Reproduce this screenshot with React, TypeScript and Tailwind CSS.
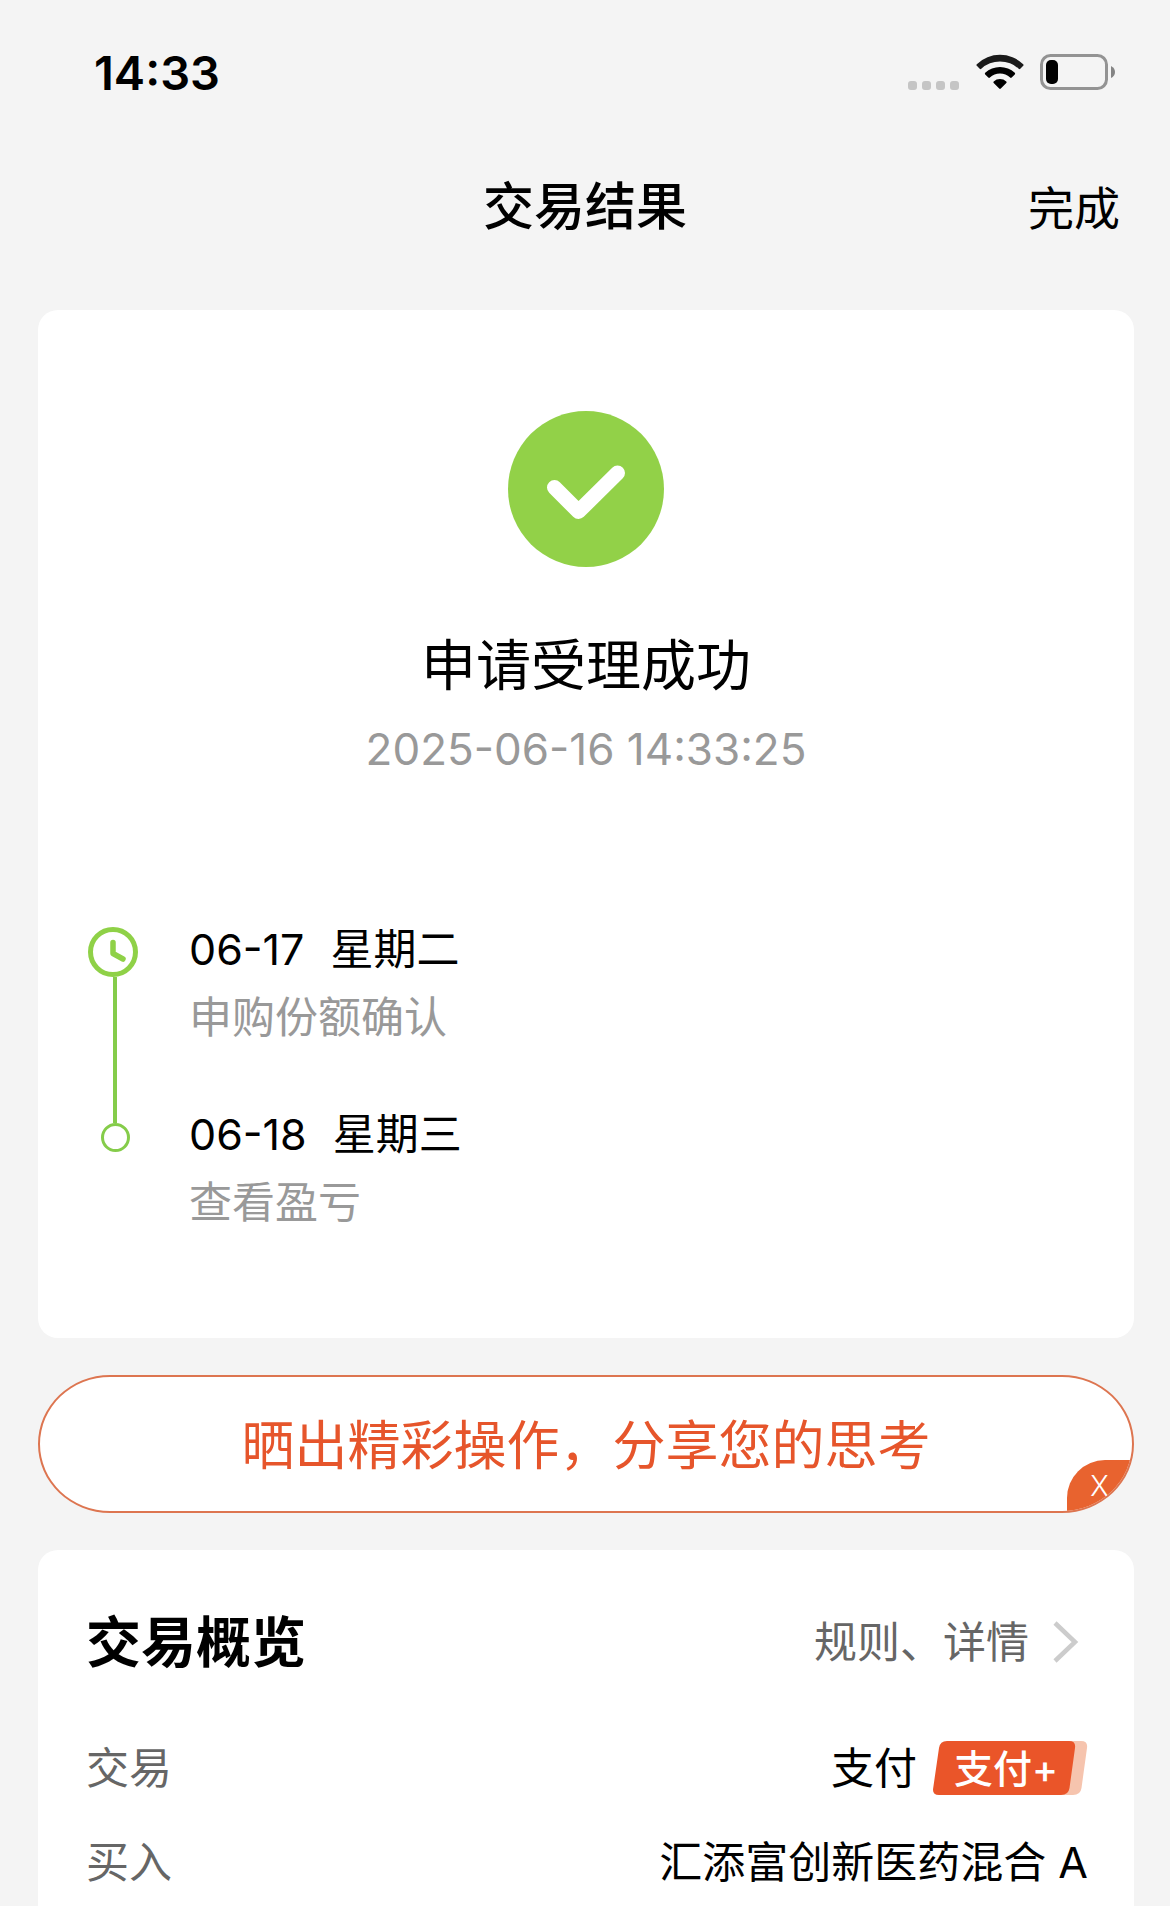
import type { ReactNode } from "react";

const steps = [
  { date: "06-17", day: "星期二", label: "申购份额确认" },
  { date: "06-18", day: "星期三", label: "查看盈亏" },
];

const StatusBar = () => {
  return (
    <div className="flex h-[144px] items-center justify-between pl-[94px] pr-[54px]">
      <span className="text-[47px] font-semibold leading-none">14:33</span>
      <div className="flex items-center">
        <svg width="52" height="36" viewBox="0 0 52 36" fill="#c5c5c5" className="mr-4">
          <rect x="0" y="27" width="9" height="9" rx="3" />
          <rect x="14" y="27" width="9" height="9" rx="3" />
          <rect x="28" y="27" width="9" height="9" rx="3" />
          <rect x="42" y="27" width="9" height="9" rx="3" />
        </svg>
        <svg width="48" height="36" viewBox="0 0 48 36" className="mr-4">
          <path
            d="M0.8 10.2 A33.5 33.5 0 0 1 47.2 10.2 Q48 11 47.2 11.8 L44.3 14.8 Q43.5 15.6 42.7 14.8 A27.5 27.5 0 0 0 5.3 14.8 Q4.5 15.6 3.7 14.8 L0.8 11.8 Q0 11 0.8 10.2 Z"
            fill="#1a1a1a"
          />
          <path d="M9.2 18.8 A21.5 21.5 0 0 1 38.8 18.8 Q39.6 19.6 38.8 20.4 L35.7 23.5 Q34.9 24.3 34.1 23.5 A15 15 0 0 0 13.9 23.5 Q13.1 24.3 12.3 23.5 L9.2 20.4 Q8.4 19.6 9.2 18.8 Z" />
          <path d="M17.7 27.4 A9.6 9.6 0 0 1 30.3 27.4 Q31.1 28.2 30.3 29 L24.8 34.6 Q24 35.4 23.2 34.6 L17.7 29 Q16.9 28.2 17.7 27.4 Z" />
        </svg>
        <svg width="76" height="36" viewBox="0 0 76 36">
          <rect x="1.5" y="1.5" width="65" height="33" rx="9" fill="none" stroke="#939393" strokeWidth="3" />
          <rect x="6" y="6" width="12" height="24" rx="5" />
          <path d="M71 12 Q75 14 75 18 Q75 22 71 24 Z" fill="#848484" />
        </svg>
      </div>
    </div>
  );
};

const ClockIcon = () => {
  return (
    <svg width="54" height="50" viewBox="0 0 54 50" fill="none" stroke="#8fd147">
      <circle cx="25" cy="25" r="22.5" strokeWidth="5" />
      <path d="M25 15.5 V26.5 L35 32" strokeWidth="5.5" strokeLinecap="round" strokeLinejoin="round" />
    </svg>
  );
};

const PayPlusBadge = () => {
  return (
    <span className="relative flex h-[54px] w-[155px] items-center pl-[21px] text-[39px] font-medium leading-none text-white">
      <svg width="155" height="54" viewBox="0 0 155 54" className="absolute left-0 top-0">
        <path
          d="M130 0 H148 Q155 0 154 7 L148.5 47 Q147.5 54 140 54 H125 Z"
          fill="#f6c4ae"
        />
        <path
          d="M14 0 H136 Q143 0 142 7 L136.5 47 Q135.5 54 128 54 H6 Q-1 54 0.2 47 L6 7 Q7 0 14 0 Z"
          fill="#ea5529"
        />
      </svg>
      <span className="relative">支付+</span>
    </span>
  );
};

const Row = ({ label, children }: { label: string; children: ReactNode }) => {
  return (
    <div className="flex h-[94px] items-center justify-between text-[43px]">
      <dt className="text-[#666666]">{label}</dt>
      <dd className="flex items-center gap-4">{children}</dd>
    </div>
  );
};

const App = () => {
  return (
    <div className="flex min-h-screen flex-col bg-[#f4f4f4] font-['Inter','Noto_Sans_CJK_SC',sans-serif] text-black">
      <StatusBar />

      <header className="grid h-[120px] grid-cols-3 items-center px-[50px] pt-1">
        <h1 className="col-start-2 text-center text-[51px] font-medium leading-none">交易结果</h1>
        <button type="button" className="justify-self-end pt-1 text-[46px] leading-none">
          完成
        </button>
      </header>

      <main className="flex flex-1 flex-col pl-[38px] pr-9 pt-[46px]">
        <section className="rounded-[20px] bg-white px-[50px] pb-[102px] pt-[101px]">
          <div className="flex flex-col items-center">
            <svg width="156" height="156" viewBox="0 0 156 156">
              <circle cx="78" cy="78" r="78" fill="#92d148" />
              <path
                d="M46.5 76.5 L70.5 100.5 L109.5 62"
                fill="none"
                stroke="white"
                strokeWidth="15"
                strokeLinecap="round"
                strokeLinejoin="round"
              />
            </svg>
            <h2 className="mt-14 text-[55px] leading-[84px]">申请受理成功</h2>
            <p className="text-[44px] leading-[84px] text-[#999999]">2025-06-16 14:33:25</p>
          </div>

          <ol className="mt-[124px]">
            {steps.map((step, i) => (
              <li key={step.date} className="flex gap-[47px]">
                <div className="flex w-[54px] flex-col items-center">
                  {i === 0 ? (
                    <>
                      <div className="pt-3">
                        <ClockIcon />
                      </div>
                      <div className="w-1 flex-1 bg-[#85cc4a]" />
                    </>
                  ) : (
                    <>
                      <div className="h-[23px] w-1 bg-[#85cc4a]" />
                      <div className="size-[29px] rounded-full border-3 border-[#85cc4a]" />
                    </>
                  )}
                </div>
                <div className={i === 0 ? "pb-[49px]" : ""}>
                  <p className="flex gap-[26px] text-[43px] leading-[68px]">
                    <span>{step.date}</span>
                    <span>{step.day}</span>
                  </p>
                  <p className="text-[43px] leading-[68px] text-[#999999]">{step.label}</p>
                </div>
              </li>
            ))}
          </ol>
        </section>

        <div className="relative mt-[37px] flex h-[138px] items-center justify-center overflow-hidden rounded-[72px_/_69px] border-2 border-[#dd7550] bg-white">
          <a href="#share" className="pt-1 text-[53px] leading-none text-[#e6552b]">
            晒出精彩操作，分享您的思考
          </a>
          <button
            type="button"
            aria-label="X"
            className="absolute bottom-0 right-0 h-[51px] w-[65px] rounded-tl-[38px] bg-[#e8632f] text-[28px] font-light leading-none text-white"
          >
            X
          </button>
        </div>

        <section className="mt-[37px] flex-1 rounded-t-[20px] bg-white pl-12 pr-[46px] pt-12">
          <div className="flex h-[88px] items-center justify-between">
            <h2 className="text-[55px] font-bold leading-none">交易概览</h2>
            <a href="#detail" className="flex items-center gap-6 pr-[9px] text-[43px] leading-none text-[#666666]">
              规则、详情
              <svg width="26" height="42" viewBox="0 0 26 42" fill="none" stroke="#cccccc" strokeWidth="4.5">
                <path d="M2 2 L22 21 L2 40" />
              </svg>
            </a>
          </div>
          <dl className="mt-[35px]">
            <Row label="交易">
              <span>支付</span>
              <PayPlusBadge />
            </Row>
            <Row label="买入">汇添富创新医药混合 A</Row>
          </dl>
        </section>
      </main>
    </div>
  );
};

export default App;
